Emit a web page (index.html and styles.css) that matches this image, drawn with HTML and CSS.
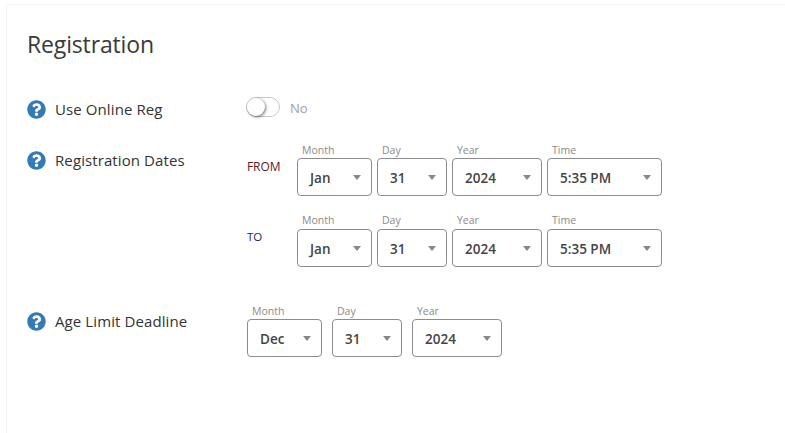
FILE: index.html
```html
<!DOCTYPE html>
<html lang="en">
<head>
<meta charset="utf-8">
<title>Registration</title>
<link rel="stylesheet" href="styles.css">
</head>
<body>
<main class="panel">
  <h1 class="title">Registration</h1>

  <section class="row row-online">
    <div class="label">
      <svg class="help" viewBox="0 0 512 512"><path d="M504 256c0 137-111 248-248 248S8 393 8 256 119 8 256 8s248 111 248 248zM262.700 90c-54.500 0-89.300 23-116.600 63.800-3.500 5.300-2.400 12.400 2.700 16.300l34.700 26.300c5.200 3.900 12.600 3 16.700-2.100 17.900-22.700 30.100-35.800 57.300-35.800 20.400 0 45.700 13.100 45.700 33 0 15-12.400 22.700-32.600 34-23.600 13.200-54.800 29.700-54.800 70.900V302c0 6.600 5.400 12 12 12h56c6.600 0 12-5.400 12-12v-1.300c0-28.600 83.500-29.800 83.500-107.100C378 135.400 317.700 90 262.700 90zM256 339c-25.400 0-46 20.600-46 46s20.600 46 46 46 46-20.600 46-46-20.600-46-46-46z"/></svg>
      <span>Use Online Reg</span>
    </div>
    <div class="toggle-wrap">
      <span class="toggle"><span class="knob"></span></span>
      <span class="toggle-text">No</span>
    </div>
  </section>

  <section class="row row-dates">
    <div class="label">
      <svg class="help" viewBox="0 0 512 512"><path d="M504 256c0 137-111 248-248 248S8 393 8 256 119 8 256 8s248 111 248 248zM262.700 90c-54.500 0-89.300 23-116.600 63.800-3.500 5.300-2.400 12.400 2.700 16.300l34.700 26.300c5.200 3.900 12.600 3 16.700-2.100 17.900-22.700 30.100-35.800 57.300-35.800 20.400 0 45.700 13.100 45.700 33 0 15-12.400 22.700-32.600 34-23.600 13.200-54.800 29.700-54.800 70.900V302c0 6.600 5.400 12 12 12h56c6.600 0 12-5.400 12-12v-1.300c0-28.600 83.500-29.800 83.500-107.100C378 135.400 317.700 90 262.700 90zM256 339c-25.400 0-46 20.600-46 46s20.600 46 46 46 46-20.600 46-46-20.600-46-46-46z"/></svg>
      <span>Registration Dates</span>
    </div>
    <div class="ranges">
      <div class="range">
        <span class="range-tag tag-from">FROM</span>
        <div class="fields">
          <div class="field w-month"><span class="cap">Month</span><div class="select"><span>Jan</span><i class="caret"></i></div></div>
          <div class="field w-day"><span class="cap">Day</span><div class="select"><span>31</span><i class="caret"></i></div></div>
          <div class="field w-year"><span class="cap">Year</span><div class="select"><span>2024</span><i class="caret"></i></div></div>
          <div class="field w-time"><span class="cap">Time</span><div class="select"><span>5:35 PM</span><i class="caret"></i></div></div>
        </div>
      </div>
      <div class="range">
        <span class="range-tag tag-to">TO</span>
        <div class="fields">
          <div class="field w-month"><span class="cap">Month</span><div class="select"><span>Jan</span><i class="caret"></i></div></div>
          <div class="field w-day"><span class="cap">Day</span><div class="select"><span>31</span><i class="caret"></i></div></div>
          <div class="field w-year"><span class="cap">Year</span><div class="select"><span>2024</span><i class="caret"></i></div></div>
          <div class="field w-time"><span class="cap">Time</span><div class="select"><span>5:35 PM</span><i class="caret"></i></div></div>
        </div>
      </div>
    </div>
  </section>

  <section class="row row-age">
    <div class="label">
      <svg class="help" viewBox="0 0 512 512"><path d="M504 256c0 137-111 248-248 248S8 393 8 256 119 8 256 8s248 111 248 248zM262.700 90c-54.500 0-89.300 23-116.600 63.800-3.500 5.300-2.400 12.400 2.700 16.300l34.700 26.300c5.200 3.900 12.600 3 16.700-2.100 17.900-22.700 30.100-35.800 57.300-35.800 20.400 0 45.700 13.100 45.700 33 0 15-12.400 22.700-32.600 34-23.600 13.200-54.800 29.700-54.800 70.900V302c0 6.600 5.400 12 12 12h56c6.600 0 12-5.400 12-12v-1.300c0-28.600 83.500-29.800 83.500-107.100C378 135.400 317.700 90 262.700 90zM256 339c-25.400 0-46 20.600-46 46s20.600 46 46 46 46-20.600 46-46-20.600-46-46-46z"/></svg>
      <span>Age Limit Deadline</span>
    </div>
    <div class="fields fields-wide">
      <div class="field w-month"><span class="cap">Month</span><div class="select"><span>Dec</span><i class="caret"></i></div></div>
      <div class="field w-day"><span class="cap">Day</span><div class="select"><span>31</span><i class="caret"></i></div></div>
      <div class="field w-year"><span class="cap">Year</span><div class="select"><span>2024</span><i class="caret"></i></div></div>
    </div>
  </section>
</main>
</body>
</html>
```

FILE: styles.css
```css
* { box-sizing: border-box; }
html, body { margin: 0; height: 100%; overflow: hidden; background: #fff; }
body {
  padding: 4px 0 0 6px;
  font-family: "Open Sans", "Noto Sans", sans-serif;
  color: #333;
}
.panel {
  height: 100%;
  border-top: 1px solid #f4f4f4;
  border-left: 1px solid #f4f4f4;
  padding: 23px 0 0 20px;
}
.title {
  margin: 0;
  font-size: 23px;
  font-weight: 400;
  line-height: 32px;
  color: #3a3a3a;
  letter-spacing: -0.15px;
}
.row { display: flex; align-items: flex-start; }
.row-online { margin-top: 39px; height: 51px; }
.row-dates { height: 161px; }
.label {
  width: 219px;
  flex: none;
  display: flex;
  align-items: center;
  gap: 9px;
  height: 20px;
  font-size: 15px;
  letter-spacing: 0.1px;
  color: #333;
}
.help { width: 19px; height: 19px; fill: #337ab7; flex: none; }
.toggle-wrap { display: flex; align-items: center; gap: 10px; margin-top: -3px; height: 22px; }
.toggle {
  display: block;
  width: 34px;
  height: 20px;
  border: 1px solid #c8c8c8;
  border-radius: 10px;
  background: #fff;
  position: relative;
}
.knob {
  position: absolute;
  left: 0;
  top: 0;
  width: 18px;
  height: 18px;
  border-radius: 50%;
  background: #fff;
  box-shadow: 1px 1px 3px rgba(0, 0, 0, .55);
}
.toggle-text { font-size: 13px; color: #9aa0a8; padding-top: 2px; }
.ranges { display: flex; flex-direction: column; gap: 17px; margin-top: -7px; }
.range { display: flex; align-items: flex-start; }
.range-tag { width: 51px; flex: none; font-size: 12px; line-height: 16px; margin-top: 16px; padding-left: 1px; letter-spacing: -0.1px; }
.tag-from { color: #5a1a1e; }
.tag-to { color: #1f1f55; font-size: 11.500px; margin-top: 16px; }
.range + .range .cap { margin-bottom: 2px; }
.fields { display: flex; gap: 5px; }
.fields-wide { gap: 10px; margin-top: -7px; margin-left: 1px; }
.field { display: flex; flex-direction: column; }
.w-month { width: 75px; }
.w-day { width: 70px; }
.w-year { width: 90px; }
.w-time { width: 115px; }
.cap {
  font-size: 10.500px;
  line-height: 14px;
  height: 14px;
  padding-left: 5px;
  color: #8a8a8a;
  margin-bottom: 1px;
}
.select {
  height: 38px;
  border: 1px solid #8c8c8c;
  border-radius: 4px;
  display: flex;
  align-items: center;
  justify-content: space-between;
  padding: 1px 10px 0 12px;
  font-size: 13.500px;
  font-weight: 600;
  color: #444;
  background: #fff;
}
.caret {
  width: 0;
  height: 0;
  margin-top: -1px;
  border-left: 4.500px solid transparent;
  border-right: 4.500px solid transparent;
  border-top: 5px solid #888;
}
```
